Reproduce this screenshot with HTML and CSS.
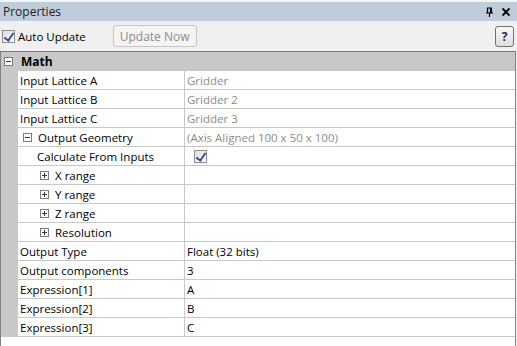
FILE: index.html
```html
<!DOCTYPE html>
<html lang="en">
<head>
    <meta charset="UTF-8">
    <title>Properties</title>
    <link rel="stylesheet" href="styles.css">
</head>
<body>
    <div class="panel">
        <header class="titlebar">
            <span class="title">Properties</span>
            <span class="title-icons">
                <svg width="9" height="10" viewBox="0 0 9 10"><path d="M2 1h5M2.5 1v5h4V1M5.5 1v5M1 6h7M4.5 6v4" stroke="#000" stroke-width="1.2" fill="none"/></svg>
                <svg width="10" height="10" viewBox="0 0 10 10"><path d="M1.5 1.5l7 7M8.5 1.5l-7 7" stroke="#000" stroke-width="1.8"/></svg>
            </span>
        </header>

        <div class="toolbar">
            <label class="auto">
                <span class="check"></span>
                Auto Update
            </label>
            <button class="update-btn" disabled>Update Now</button>
            <button class="help-btn">?</button>
        </div>

        <div class="grid">
            <div class="category">
                <span class="box minus"></span>
                <span>Math</span>
            </div>
            <div id="rows"></div>
        </div>
    </div>

    <script>
        // property rows: name, value, indent level, expander, muted value
        const rows = [
            { name: "Input Lattice A", value: "Gridder", level: 0, muted: true },
            { name: "Input Lattice B", value: "Gridder 2", level: 0, muted: true },
            { name: "Input Lattice C", value: "Gridder 3", level: 0, muted: true },
            { name: "Output Geometry", value: "(Axis Aligned 100 x 50 x 100)", level: 1, box: "minus", muted: true },
            { name: "Calculate From Inputs", value: "", level: 1, check: true },
            { name: "X range", value: "", level: 2, box: "plus" },
            { name: "Y range", value: "", level: 2, box: "plus" },
            { name: "Z range", value: "", level: 2, box: "plus" },
            { name: "Resolution", value: "", level: 2, box: "plus" },
            { name: "Output Type", value: "Float (32 bits)", level: 0 },
            { name: "Output components", value: "3", level: 0 },
            { name: "Expression[1]", value: "A", level: 0 },
            { name: "Expression[2]", value: "B", level: 0 },
            { name: "Expression[3]", value: "C", level: 0 }
        ];

        const list = document.getElementById("rows");
        rows.forEach(row => {
            const div = document.createElement("div");
            div.className = "row";
            const box = row.box ? `<span class="box ${row.box}"></span>` : "";
            const value = row.check ? `<span class="check small"></span>` : row.value;
            div.innerHTML = `
                <div class="name level-${row.level}">${box}<span>${row.name}</span></div>
                <div class="value${row.muted ? " muted" : ""}">${value}</div>
            `;
            list.appendChild(div);
        });
    </script>
</body>
</html>
```

FILE: styles.css
```css
* {
    box-sizing: border-box;
}

body {
    margin: 0;
    font-family: "Open Sans", sans-serif;
    font-size: 11.5px;
    color: #000;
    background: #fff;
}

.panel {
    width: 517px;
    height: 346px;
    display: flex;
    flex-direction: column;
    background: #f0f0f0;
}

.titlebar {
    height: 21px;
    border-top: 2px solid #f2f4f7;
    background: #bfcddb;
    display: flex;
    align-items: center;
    justify-content: space-between;
    padding: 0 6px 0 3px;
}

.title {
    color: #1e1e1e;
    font-size: 12px;
}

.title-icons {
    display: flex;
    align-items: center;
    gap: 7px;
}

.toolbar {
    height: 30px;
    display: flex;
    align-items: center;
    padding: 0 3px 0 2px;
}

.auto {
    display: flex;
    align-items: center;
    gap: 3px;
    margin-right: 27px;
}

.check {
    width: 13px;
    height: 13px;
    border: 1px solid #8e8f8f;
    background: linear-gradient(135deg, #dcdcdc, #fff);
    position: relative;
}

.check::after {
    content: "";
    position: absolute;
    left: 3px;
    top: 0;
    width: 4px;
    height: 8px;
    border: solid #3d4f8c;
    border-width: 0 2px 2px 0;
    transform: rotate(35deg);
}

.update-btn {
    height: 22px;
    padding: 0 6px;
    font: inherit;
    font-size: 12px;
    color: #8d8d8d;
    background: #f4f4f4;
    border: 1px solid #c6c6c6;
    border-radius: 3px;
}

.help-btn {
    margin-left: auto;
    width: 19px;
    height: 21px;
    padding: 0;
    font: bold 12px "Open Sans", sans-serif;
    color: #1b2a4d;
    background: linear-gradient(#f8f8f8, #dedede);
    border: 1px solid #707070;
    border-radius: 3px;
}

.grid {
    flex: 1;
    background: #fff;
    border: 1px solid #828282;
    border-bottom: none;
    border-top-color: #7a7a7a;
    margin-right: 1px;
}

.category {
    height: 19px;
    background: #c8c8c8;
    display: flex;
    align-items: center;
    font-weight: bold;
    font-size: 12px;
    gap: 8px;
    padding-left: 3px;
}

.row {
    display: flex;
    height: 19px;
    border-bottom: 1px solid #c8c8c8;
    margin-left: 17px;
    position: relative;
}

.row::before {
    content: "";
    position: absolute;
    left: -17px;
    top: 0;
    bottom: -1px;
    width: 17px;
    background: #c8c8c8;
}

.name {
    width: 167px;
    flex: none;
    border-right: 1px solid #c8c8c8;
    display: flex;
    align-items: center;
    gap: 6px;
    padding-left: 2px;
    white-space: nowrap;
}

.name.level-1 {
    padding-left: 5px;
}

.name.level-1 > span:only-child {
    padding-left: 14px;
}

.name.level-2 {
    padding-left: 22px;
}

.value {
    flex: 1;
    display: flex;
    align-items: center;
    padding-left: 2px;
}

.value.muted {
    color: #8c8c8c;
}

.check.small {
    margin-left: 7px;
}

.box {
    width: 9px;
    height: 9px;
    border: 1px solid #7c7c7c;
    background: #fff;
    position: relative;
    flex: none;
}

.box::before {
    content: "";
    position: absolute;
    left: 1px;
    top: 3px;
    width: 5px;
    height: 1px;
    background: #333;
}

.box.plus::after {
    content: "";
    position: absolute;
    left: 3px;
    top: 1px;
    width: 1px;
    height: 5px;
    background: #333;
}
```
